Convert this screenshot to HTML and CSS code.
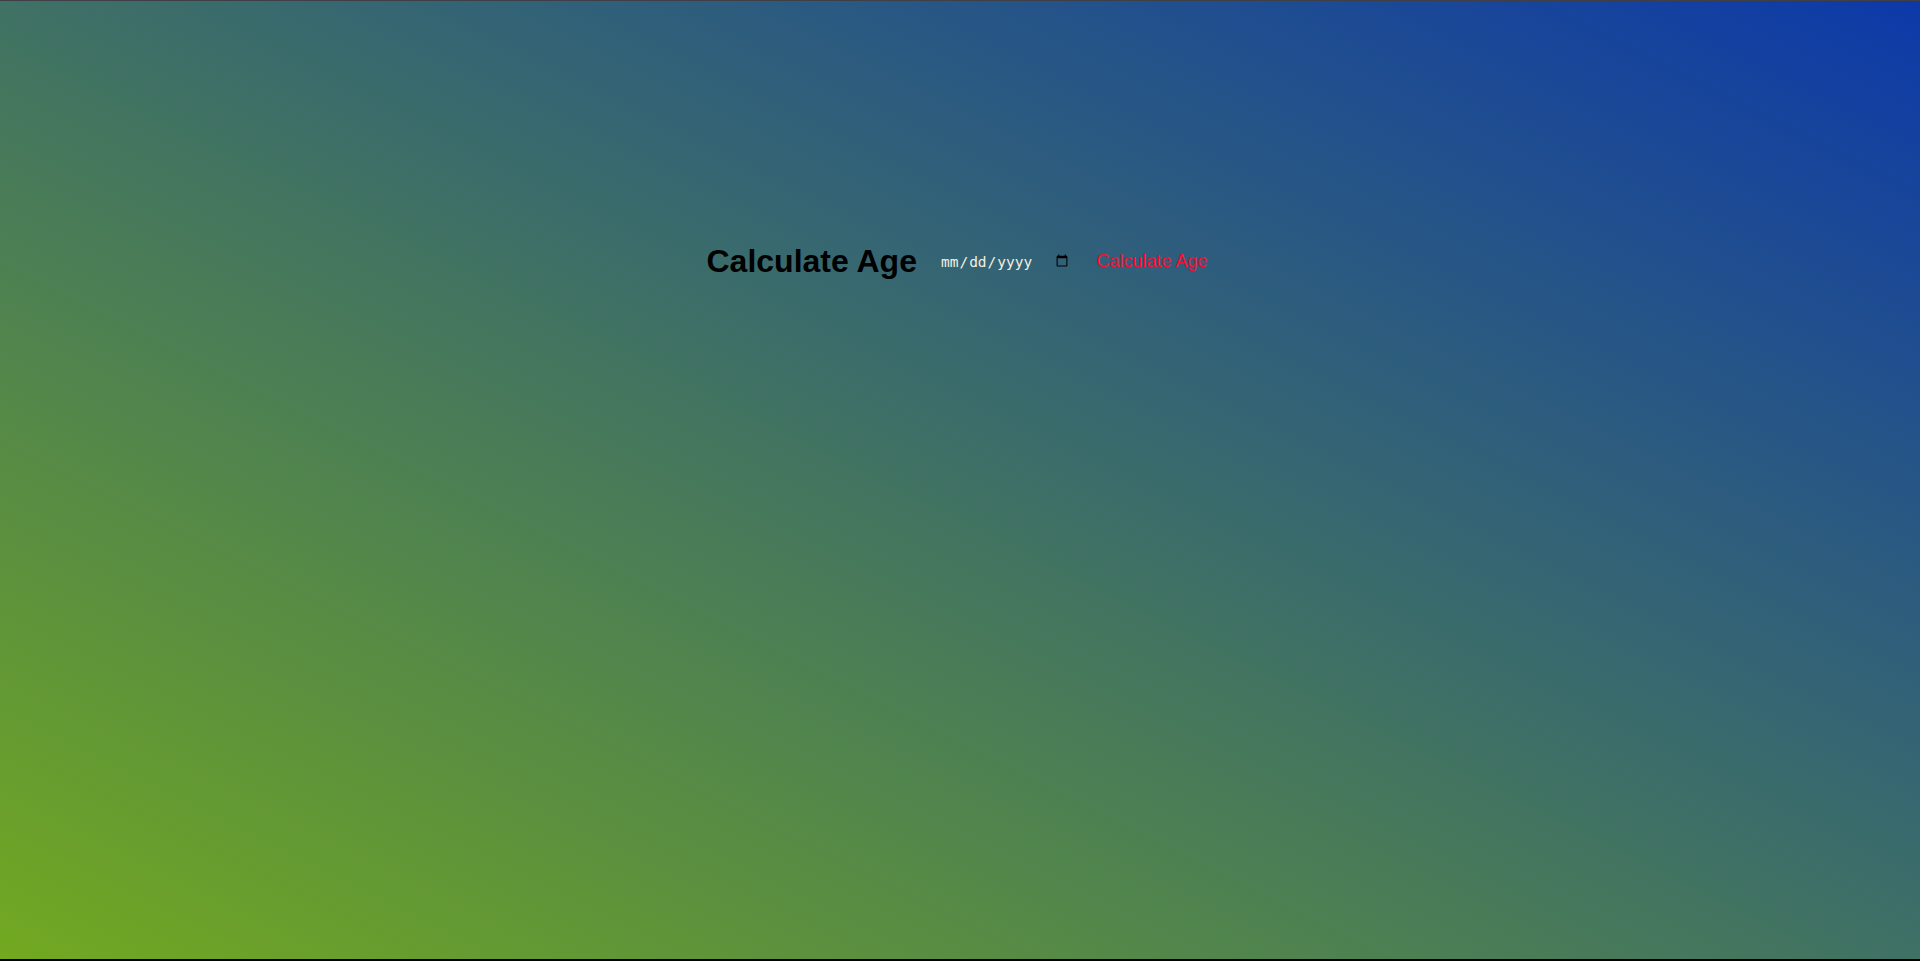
FILE: index.html
```html
<!DOCTYPE html>
<html lang="en">
<head>
<meta charset="utf-8">
<title>Calculate Age</title>
<link rel="stylesheet" href="styles.css">
</head>
<body>
<div class="page">
  <div class="row">
    <h1 class="title">Calculate Age</h1>
    <input class="date" type="date">
    <button class="calc" type="button">Calculate Age</button>
  </div>
</div>
</body>
</html>
```
FILE: styles.css
```css
html, body {
  margin: 0;
  padding: 0;
}
body {
  background: #000;
}
.page {
  box-sizing: border-box;
  height: 959px;
  border-top: 1px solid #3e3f47;
  background: linear-gradient(to top right, #72a920, #0d39a9);
  font-family: "Liberation Sans", Arial, sans-serif;
  padding-top: 242px;
}
.row {
  display: flex;
  align-items: center;
  justify-content: center;
  padding-right: 6px;
}
.title {
  margin: 0 21px 0 0;
  font-size: 32px;
  font-weight: bold;
  color: #000;
  line-height: 37px;
}
.date {
  font-family: "DejaVu Sans Mono", monospace;
  font-size: 14.5px;
  color: #f4f0e0;
  background: transparent;
  border: none;
  padding: 0 2px;
  outline: none;
}
.date::-webkit-calendar-picker-indicator {
  margin-left: 2px;
}
.calc {
  margin-left: 23px;
  font-family: "Liberation Sans", Arial, sans-serif;
  font-size: 18px;
  color: #ff0a2e;
  background: transparent;
  border: none;
  padding: 0;
}
```
